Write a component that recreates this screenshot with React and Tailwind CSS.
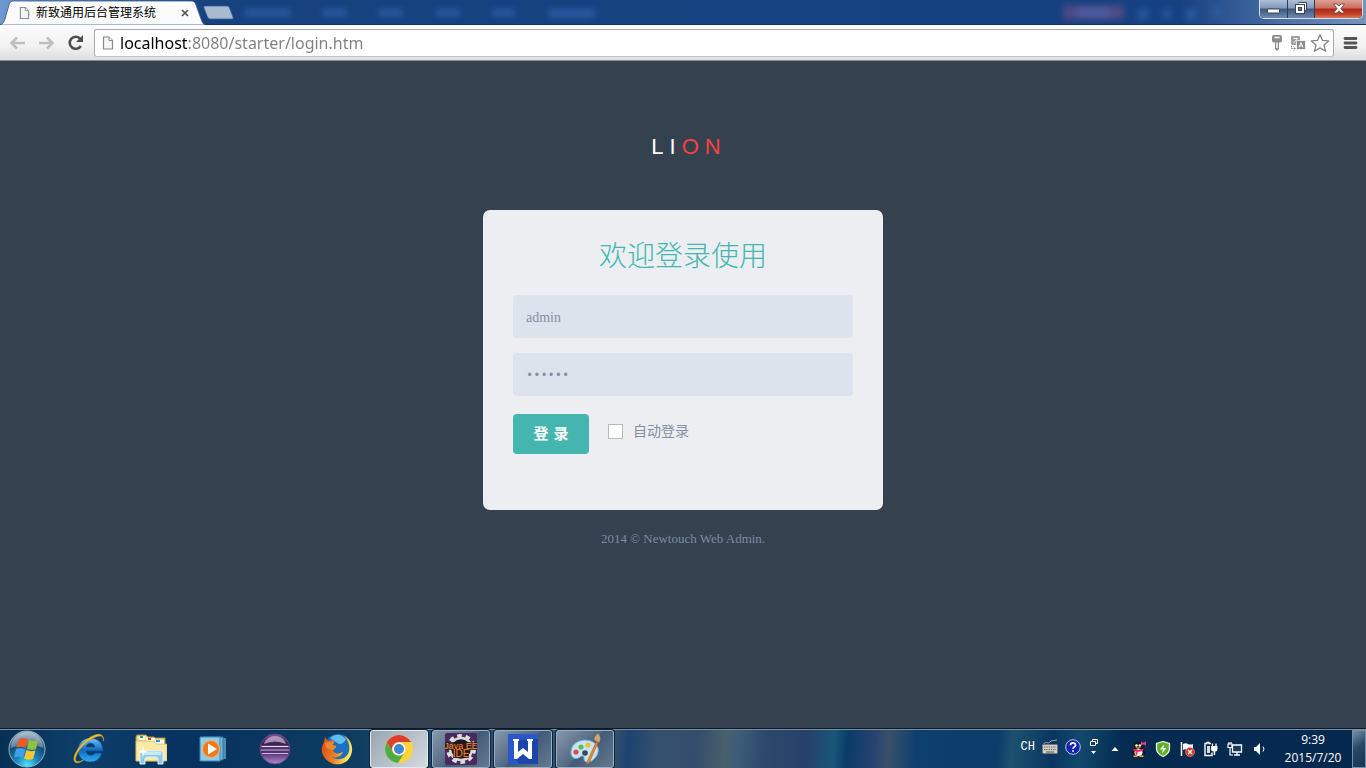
import React from "react";

function FileIcon({ className }) {
  return (
    <svg className={className} viewBox="0 0 12 15" aria-hidden="true">
      <path d="M1.5 1.5h5.5l3.5 3.5v8.5h-9z" fill="#f4f4f4" stroke="#8a8a8a" strokeWidth="1.2" />
      <path d="M7 1.5v3.5h3.5" fill="#fff" stroke="#8a8a8a" strokeWidth="1" />
    </svg>
  );
}

function TitleBar() {
  return (
    <header className="relative flex h-[25px] items-start justify-between border-b border-[#10346e] bg-[linear-gradient(90deg,#6f97d0_0px,#5f86c0_30px,#17427f_205px,#164181_1180px,#4a6ea5_1280px,#7795be_100%)]">
      <svg className="absolute inset-0 h-6 w-full" aria-hidden="true">
        <defs>
          <filter id="soft" x="-50%" y="-80%" width="200%" height="260%">
            <feGaussianBlur stdDeviation="3" />
          </filter>
        </defs>
        <g filter="url(#soft)" fill="#2f5fa8" opacity="0.75">
          <rect x="245" y="9" width="46" height="8" />
          <rect x="323" y="9" width="24" height="8" />
          <rect x="379" y="9" width="24" height="8" />
          <rect x="436" y="9" width="24" height="8" />
          <rect x="492" y="9" width="23" height="8" />
          <rect x="548" y="9" width="47" height="9" />
          <circle cx="1143" cy="14" r="6" />
          <circle cx="1167" cy="14" r="5" />
          <circle cx="1191" cy="14" r="6" />
          <circle cx="1217" cy="12" r="5" />
        </g>
        <rect x="1063" y="5" width="61" height="15" fill="#5a4b88" opacity="0.8" filter="url(#soft)" />
        <rect x="1077" y="9" width="34" height="7" fill="#4660a5" filter="url(#soft)" />
      </svg>

      <div className="relative flex">
        <div className="relative h-[25px] w-[205px]">
          <svg className="absolute inset-0 h-[25px] w-[205px]" viewBox="0 0 205 25" aria-hidden="true">
            <path d="M0 25c3-1 4-3 5-6L9 5c1-3 2-4 5-4h177c3 0 4 1 5 4l5 14c1 3 2 5 4 6z" fill="#fbfbfb" stroke="#365a90" strokeWidth="0.8" />
          </svg>
          <div className="relative flex h-[25px] items-center pl-[19px]">
            <FileIcon className="h-[14px] w-[11px]" />
            <span className="ml-[6px] text-[12px] leading-4 font-['Liberation_Sans','Noto_Sans_CJK_SC',sans-serif] text-black">新致通用后台管理系统</span>
            <button type="button" aria-label="关闭标签页" className="ml-[25px] flex h-4 w-2">
              <svg className="m-auto h-2 w-2" viewBox="0 0 8 8" aria-hidden="true">
                <path d="M1 1l6 6M7 1L1 7" stroke="#555" strokeWidth="1.7" />
              </svg>
            </button>
          </div>
        </div>
        <button type="button" aria-label="新标签页" className="-ml-[3px] h-5 w-8 pt-1">
          <svg className="h-4 w-8" viewBox="0 0 32 16" aria-hidden="true">
            <path d="M3 2h21c2 0 3 .5 3.500 2l3.500 9c.5 1.500 0 2-1.500 2H9c-2 0-3-1-3.500-2L2 4c-.5-1.300 0-2 1-2z" fill="#a9b9cf" stroke="#375f98" strokeWidth="0.8" />
          </svg>
        </button>
      </div>

      <div className="relative mr-[3px] flex h-[19px] w-[104px] overflow-hidden rounded-b-[5px] border border-t-0 border-[#d3deeb] bg-[#27334a]">
        <button type="button" aria-label="最小化" className="flex flex-1 border-r border-[#2b3c5c] bg-[linear-gradient(#aebfd6,#8299ba_45%,#3c5780_50%,#7089ad)]">
          <svg className="m-auto h-4 w-6" viewBox="0 0 24 16" aria-hidden="true">
            <rect x="6.500" y="8" width="12" height="4" rx="0.500" fill="#fff" stroke="#3b4453" />
          </svg>
        </button>
        <button type="button" aria-label="还原" className="flex flex-1 border-r border-[#2b3c5c] bg-[linear-gradient(#aebfd6,#8299ba_45%,#3c5780_50%,#7089ad)]">
          <svg className="m-auto h-4 w-6" viewBox="0 0 24 16" aria-hidden="true">
            <path d="M9.500 1.500h8v8h-2.500" fill="#fff" stroke="#3b4453" />
            <rect x="6.500" y="3.500" width="9" height="9" fill="#fff" stroke="#3b4453" />
            <rect x="9.500" y="6.500" width="3" height="3" fill="#667c9d" stroke="#3b4453" />
          </svg>
        </button>
        <button type="button" aria-label="关闭" className="flex w-[47px] bg-[linear-gradient(#dfa095,#cb6d5c_45%,#ae2814_50%,#c5442b_80%,#dc7a5d)]">
          <svg className="m-auto h-4 w-6" viewBox="0 0 24 16" aria-hidden="true">
            <path d="M6.500 3h3.500l2 2.200L14 3h3.500l-3.600 4.500 3.600 4.500H14l-2-2.200L10 12H6.500l3.600-4.500z" fill="#fff" stroke="#5b3a41" strokeWidth="0.800" />
          </svg>
        </button>
      </div>
    </header>
  );
}

function Toolbar() {
  return (
    <nav className="flex h-9 items-center border-b border-[#8b8d90] bg-[linear-gradient(#fcfcfc,#f2f2f2_60%,#dddddd)] pl-2">
      <button type="button" aria-label="后退" className="h-5 w-5">
        <svg className="h-5 w-5" viewBox="0 0 20 20" aria-hidden="true">
          <path d="M17 10H4M9 4.500L3.500 10 9 15.500" fill="none" stroke="#bfbfbf" strokeWidth="2.500" />
        </svg>
      </button>
      <button type="button" aria-label="前进" className="ml-2 h-5 w-5">
        <svg className="h-5 w-5" viewBox="0 0 20 20" aria-hidden="true">
          <path d="M3 10h13M11 4.500l5.500 5.500-5.500 5.500" fill="none" stroke="#bfbfbf" strokeWidth="2.500" />
        </svg>
      </button>
      <button type="button" aria-label="重新加载" className="ml-[10px] h-5 w-5">
        <svg className="h-5 w-5" viewBox="0 0 20 20" aria-hidden="true">
          <path d="M14.800 13A6 6 0 1 1 14 5.600" fill="none" stroke="#4d4d4d" strokeWidth="2.600" />
          <path d="M17 2v7h-7z" fill="#4d4d4d" />
        </svg>
      </button>
      <div className="ml-2 flex h-7 min-w-0 flex-1 items-center rounded-[3px] border border-[#a9a9a9] border-b-[#c4c4c4] bg-white pr-[3px] pl-[7px]">
        <FileIcon className="h-[16px] w-[12px] shrink-0" />
        <input
          type="text"
          aria-label="地址栏"
          defaultValue="localhost:8080/starter/login.htm"
          className="ml-[6px] h-6 min-w-0 flex-1 bg-[linear-gradient(90deg,#000_67px,#7f7f7f_67px)] bg-clip-text p-0 text-[16px] leading-6 font-['Noto_Sans','Open_Sans',sans-serif] text-transparent caret-black outline-none"
        />
        <div className="flex shrink-0 items-center gap-[5px]">
          <button type="button" aria-label="已保存的密码" className="h-5 w-4">
            <svg className="h-5 w-4" viewBox="0 0 16 20" aria-hidden="true">
              <path d="M3 4q0-2 2-2h6q2 0 2 2v3.500q0 2-2 2h-1V16l-1.500 1.500h-1L6 16V9.500H5q-2 0-2-2z" fill="#8c8c8c" />
              <path d="M5.500 4.500h5M8 9.500V15" stroke="#fff" strokeWidth="1.500" />
            </svg>
          </button>
          <button type="button" aria-label="翻译此页" className="h-5 w-4">
            <svg className="h-5 w-4" viewBox="0 0 16 20" aria-hidden="true">
              <rect x="1" y="3" width="9" height="9" rx="1" fill="#a0a0a0" />
              <path d="M3.500 5.500h4M7 5.500c-.5 2-2 3.500-3.500 4" fill="none" stroke="#fff" />
              <rect x="6.500" y="7.500" width="9" height="9" rx="1" fill="#8c8c8c" stroke="#fff" strokeWidth="0.800" />
              <path d="M9 14.500l2-5 2 5M9.800 12.800h2.400" fill="none" stroke="#fff" />
              <path d="M1.500 13v2.500H5M3.500 13.500l2 2-2 2" fill="none" stroke="#8c8c8c" strokeDasharray="1.500 0.700" />
            </svg>
          </button>
          <button type="button" aria-label="为此网页添加书签" className="-ml-px h-5 w-5">
            <svg className="h-5 w-5" viewBox="0 0 20 20" aria-hidden="true">
              <path d="M10 1.500l2.500 5.900 6.200.5-4.700 4.100 1.500 6.200L10 14.900l-5.500 3.300L6 12 1.300 7.900l6.200-.5z" fill="#fff" stroke="#858585" strokeWidth="1.300" strokeLinejoin="round" />
            </svg>
          </button>
        </div>
      </div>
      <button type="button" aria-label="菜单" className="mx-2 flex h-5 w-4 items-center justify-center">
        <svg className="h-4 w-4" viewBox="0 0 16 16" aria-hidden="true">
          <path d="M3 3.500h11M3 8h11M3 12.500h11" stroke="#555" strokeWidth="2.800" strokeLinecap="round" />
        </svg>
      </button>
    </nav>
  );
}

function LoginPage() {
  return (
    <main className="flex flex-1 flex-col items-center bg-[#364150] pt-[70px] pb-10 font-['Liberation_Serif','Noto_Sans_CJK_SC',serif] text-[14px]">
      <div className="flex h-8 items-center gap-[6px] pl-[6px] text-[22px] leading-8 font-['Liberation_Sans',sans-serif] text-white">
        <span>L</span>
        <span>I</span>
        <span className="text-[#f9423f]">O</span>
        <span className="text-[#f9423f]">N</span>
      </div>
      <form className="mt-[47px] w-full max-w-[400px] rounded-[7px] bg-[#eceef1] px-[30px] pt-6 pb-14" onSubmit={(e) => e.preventDefault()}>
        <h1 className="text-center text-[28px] leading-10 font-light font-['Noto_Sans_CJK_SC',sans-serif] text-[#45b6af]">欢迎登录使用</h1>
        <input type="text" aria-label="用户名" defaultValue="admin" className="mt-[21px] block h-[43px] w-full rounded-[4px] bg-[#dde3ec] px-[13px] pt-[2px] text-[#8290a3] outline-none" />
        <input type="password" aria-label="密码" defaultValue="123456" className="mt-[15px] block h-[43px] w-full rounded-[4px] bg-[#dde3ec] px-[13px] pt-[2px] text-[12px] font-['Liberation_Mono',monospace] text-[#8290a3] outline-none" />
        <div className="mt-[18px] flex items-center">
          <button type="submit" className="h-10 w-[76px] rounded-[4px] bg-[#45b6af] text-[15px] font-bold font-['DejaVu_Sans','Noto_Sans_CJK_SC',sans-serif] text-white">登 录</button>
          <input id="remember" type="checkbox" className="mb-[5px] ml-[19px] h-[15px] w-[15px] appearance-none border border-[#b8b8b8] bg-white checked:bg-[#45b6af]" />
          <label htmlFor="remember" className="mb-1 ml-[10px] leading-5 text-[#8290a3]">自动登录</label>
        </div>
      </form>
      <footer className="mt-[19px] text-[13px] leading-5 text-[#7a8ca5]">2014 © Newtouch Web Admin.</footer>
    </main>
  );
}

function StartIcon() {
  return (
    <svg className="h-[38px] w-[38px]" viewBox="0 0 38 38" aria-hidden="true">
      <defs>
        <radialGradient id="orb" cx="0.5" cy="0.95" r="0.9">
          <stop offset="0" stopColor="#4fe5ff" />
          <stop offset="0.35" stopColor="#1687bd" />
          <stop offset="0.7" stopColor="#174970" />
          <stop offset="1" stopColor="#8aa5b8" />
        </radialGradient>
      </defs>
      <circle cx="19" cy="19" r="18" fill="url(#orb)" stroke="#8fb3c7" />
      <path d="M3 18a16 16 0 0 1 32 0c-8-4-24-3-32 0z" fill="#fff" opacity="0.3" />
      <path d="M11 9c3-1.500 6-1 9 .5L18 18c-3-1.500-6-1.500-9.500-.5z" fill="#ee5a24" />
      <path d="M21 10c3 1.300 5.500 1.500 9 .3L28 19c-3 1.300-6 1-9-.3z" fill="#8cc63e" />
      <path d="M8 19c3-1.200 6-1 9.500.3L15 28c-3-1.500-6-1.500-9-.3z" fill="#3f9fe8" />
      <path d="M18.500 20c3 1.400 6 1.500 9 .4L25 29c-3 1.200-6 1-9-.4z" fill="#fcc52f" />
    </svg>
  );
}

function IeIcon() {
  return (
    <svg className="h-8 w-8" viewBox="0 0 32 32" aria-hidden="true">
      <defs>
        <linearGradient id="ie" x2="0" y2="1">
          <stop offset="0" stopColor="#72c7f5" />
          <stop offset="0.5" stopColor="#1168c0" />
          <stop offset="1" stopColor="#2bb0f4" />
        </linearGradient>
      </defs>
      <path d="M30 18H13c0 4 6 6 9 2h7c-2 6-6 9-12 9-7 0-12-5-12-12S10 5 17 5c8 0 13 5 13 13zM13 14h9c-1-5-8-5-9 0z" fill="url(#ie)" stroke="#0b4e94" strokeWidth="0.700" />
      <path d="M30.500 8c1-5-3-6-8-4C12 8 4 18 2.500 25c-1 5 4 4 8 2-5 4-10 4-9.500-2C2 17 13 5 22 2c6-2 9 1 8.500 6z" fill="#f8c52e" stroke="#d19c1c" strokeWidth="0.700" />
    </svg>
  );
}

function ExplorerIcon() {
  return (
    <svg className="h-8 w-8" viewBox="0 0 32 32" aria-hidden="true">
      <path d="M1 4l1-2h9l2 2h6l1 1h10v23H1z" fill="#eed88b" stroke="#ad9342" />
      <path d="M4 3h6v4H4z" fill="#fff" /><path d="M5 3h3v2H5z" fill="#28a745" />
      <path d="M11 5h9v4h-9z" fill="#fff" /><path d="M13 5h3v2h-3z" fill="#dc402b" />
      <path d="M20 7h9v4h-9z" fill="#fff" /><path d="M21 7h4v2h-4z" fill="#2795e9" />
      <path d="M1 8h18l2 3h11v17H1z" fill="#fbe9a5" stroke="#cfb35c" strokeWidth="0.700" />
      <path d="M5 31V20q0-2 2-2h19q2 0 2 2v11h-5v-5q0-2-2-2h-9q-2 0-2 2v5z" fill="#8bc9e8" stroke="#d8f3ff" />
      <path d="M7 19h19v3H7z" fill="#c8e9f7" />
      <path d="M8 11l.7 6 4.300 2-4.300 1L8 26l-.7-6L3 19l4.300-2z" fill="#fff" />
    </svg>
  );
}

function MediaIcon() {
  return (
    <svg className="h-7 w-7" viewBox="0 0 28 28" aria-hidden="true">
      <path d="M8 3h19v21H8z" fill="#498fba" />
      <path d="M5 2h19v23H5z" fill="#70b7d8" stroke="#30769f" />
      <path d="M1 2h20v24H1z" fill="#8fcbe4" stroke="#3a88b5" />
      <circle cx="12" cy="14" r="8.500" fill="#ef7a1d" stroke="#fbb36b" />
      <path d="M9 8.500l9 5.500-9 5.500z" fill="#fff" />
    </svg>
  );
}

function EclipseIcon() {
  return (
    <svg className="h-8 w-8" viewBox="0 0 32 32" aria-hidden="true">
      <defs>
        <linearGradient id="ecl" x2="0" y2="1">
          <stop offset="0" stopColor="#7c5290" />
          <stop offset="0.35" stopColor="#38204f" />
          <stop offset="0.65" stopColor="#593579" />
          <stop offset="1" stopColor="#b48dd0" />
        </linearGradient>
      </defs>
      <circle cx="16" cy="16" r="15" fill="url(#ecl)" stroke="#68457f" />
      <path d="M5 11Q8 3 16 3t11 8Q16 6 5 11z" fill="#e4cfeb" opacity="0.600" />
      <path d="M2.500 13.500h27" stroke="#e5d5ee" strokeWidth="1.300" />
      <path d="M2 17h28M3 20.500h26" stroke="#cdb4dc" strokeWidth="1.200" />
    </svg>
  );
}

function FirefoxIcon() {
  return (
    <svg className="h-8 w-8" viewBox="0 0 32 32" aria-hidden="true">
      <defs>
        <linearGradient id="fox" x2="1" y2="0.300">
          <stop offset="0" stopColor="#d9431c" />
          <stop offset="0.600" stopColor="#ef8323" />
          <stop offset="1" stopColor="#ffe65c" />
        </linearGradient>
      </defs>
      <circle cx="17" cy="14" r="13" fill="#1f6fc0" />
      <path d="M9 5Q17-2 25 6q-2 5-7 5-5-3-9-6z" fill="#5fc0ef" />
      <path d="M22 2c10 5 12 17 5 25-7 7-19 5-24-3C0 19 0 14 3 9l1-5 3 4c2-1 4-1 6 0 0 2-1 3-2 4l4 1c1 2-3 3-3 5 2 3 6 3 10 1-2 5-8 7-12 4 5 5 13 4 17-2 3-6 1-14-5-19z" fill="url(#fox)" />
      <path d="M4 10l4-1c2 0 3 0 5-1 0 2-1 3-2 4l4 1c1 1-2 2-3 4-4 0-8-2-8-7z" fill="#ef882a" />
    </svg>
  );
}

function ChromeIcon() {
  return (
    <svg className="h-[30px] w-[30px]" viewBox="0 0 30 30" aria-hidden="true">
      <circle cx="15" cy="15" r="14" fill="#fdd43a" />
      <path d="M2.900 8A14 14 0 0 1 27.100 8H15a7 7 0 0 0-6.100 10.500z" fill="#dc3f32" />
      <path d="M2.900 8A14 14 0 0 0 14 29l6.500-10.500A7 7 0 0 1 8.900 18.500z" fill="#4dac47" />
      <circle cx="15" cy="15" r="6.500" fill="#fff" />
      <circle cx="15" cy="15" r="5" fill="#3e86d8" />
    </svg>
  );
}

function JavaIcon() {
  return (
    <svg className="h-8 w-8" viewBox="0 0 32 32" aria-hidden="true">
      <rect width="32" height="32" rx="2" fill="#4a295f" />
      <circle cx="16" cy="16" r="13" fill="none" stroke="#dededf" strokeWidth="4" strokeDasharray="4.500 3.670" />
      <circle cx="16" cy="16" r="11" fill="#1b171d" stroke="#d8d8d8" strokeWidth="2.500" />
      <path d="M0 9h32v8H24v8H8v-8H0z" fill="#2a1820" opacity="0.850" />
      <text x="16" y="15.500" textAnchor="middle" fontFamily="Liberation Sans, sans-serif" fontSize="9" fill="#ff8a22">Java EE</text>
      <text x="16" y="24" textAnchor="middle" fontFamily="Liberation Sans, sans-serif" fontSize="10" fill="#ff8a22">IDE</text>
    </svg>
  );
}

function WriterIcon() {
  return (
    <svg className="h-[30px] w-[30px]" viewBox="0 0 30 30" aria-hidden="true">
      <rect width="30" height="30" fill="#2858c9" />
      <path d="M30 5v25H12l-6-6 5-18z" fill="#1e45aa" />
      <path d="M5 5h6v2h-1v11l5-4 5 4V7h-1V5h6v2h-1v18h-3l-6-5-6 5H6V7H5z" fill="#fff" />
    </svg>
  );
}

function PaintIcon() {
  return (
    <svg className="h-8 w-8" viewBox="0 0 32 32" aria-hidden="true">
      <path d="M2 18C3 9 13 5 22 8c9 3 9 12 4 17-5 6-11 5-11 1 0-3-1-4-4-2-5 4-10 0-9-6z" fill="#c5e4f5" stroke="#6da7cd" />
      <circle cx="7" cy="19" r="2.600" fill="#e64a3f" />
      <circle cx="12" cy="14" r="2.600" fill="#61bd4f" />
      <circle cx="19" cy="12" r="2.600" fill="#f1bf33" />
      <circle cx="16" cy="20" r="2.800" fill="#39495c" />
      <path d="M27 9l2 1-9 20c-1 2-3 1-2-1z" fill="#ed8628" stroke="#aa5517" strokeWidth="0.500" />
      <path d="M25 7c0-4 2-4 4-7 3 3 3 7 1 10z" fill="#cfa47a" stroke="#82603e" strokeWidth="0.500" />
    </svg>
  );
}

const pinned = [
  { name: "Internet Explorer", Icon: IeIcon },
  { name: "资源管理器", Icon: ExplorerIcon },
  { name: "媒体播放器", Icon: MediaIcon },
  { name: "Eclipse", Icon: EclipseIcon },
  { name: "Firefox", Icon: FirefoxIcon },
];

const running = [
  { name: "Java EE IDE", Icon: JavaIcon },
  { name: "WPS 文字", Icon: WriterIcon },
  { name: "画图", Icon: PaintIcon },
];

function TrayButton({ label, children, className = "w-4" }) {
  return (
    <button type="button" aria-label={label} className={"flex h-5 items-center justify-center " + className}>
      {children}
    </button>
  );
}

function Tray() {
  return (
    <div className="flex h-full items-center">
      <div className="mb-[5px] flex items-center gap-[7px]">
        <button type="button" className="text-[12px] leading-4 font-['Liberation_Mono',monospace] text-white">CH</button>
        <TrayButton label="键盘">
          <svg className="h-4 w-4" viewBox="0 0 16 16" aria-hidden="true">
            <path d="M2 5c0-3 5 0 6-2s4-1 7-2" fill="none" stroke="#aaa" />
            <rect x="0.500" y="5.500" width="15" height="9" rx="1" fill="#d0cfc9" stroke="#77756f" />
            <path d="M2 8h12M2 10.500h12" stroke="#5d5b56" strokeDasharray="1.300 1" />
            <path d="M4 13h8" stroke="#5d5b56" />
          </svg>
        </TrayButton>
        <TrayButton label="帮助">
          <svg className="h-4 w-4" viewBox="0 0 16 16" aria-hidden="true">
            <circle cx="8" cy="8" r="7.300" fill="#1224b0" stroke="#b8c5ee" />
            <path d="M5.500 6.200c0-3 5-3 5 0 0 1.700-2.500 1.700-2.500 3.600M8 11.200v1.500" fill="none" stroke="#fff" strokeWidth="1.700" />
          </svg>
        </TrayButton>
        <TrayButton label="语言栏选项" className="w-3">
          <svg className="h-[17px] w-3" viewBox="0 0 12 17" aria-hidden="true">
            <path d="M4.500 3.500v-2h5v4h-2M2.500 3.500h5v4h-5z" fill="none" stroke="#fff" />
            <path d="M3 13h5l-2.500 3z" fill="#fff" />
          </svg>
        </TrayButton>
      </div>
      <div className="ml-[7px] flex items-center gap-2">
        <TrayButton label="显示隐藏的图标">
          <svg className="h-2 w-2" viewBox="0 0 8 8" aria-hidden="true"><path d="M0.500 6h7L4 2z" fill="#fff" /></svg>
        </TrayButton>
        <TrayButton label="QQ">
          <svg className="h-4 w-4" viewBox="0 0 16 16" aria-hidden="true">
            <path d="M7 1c3.500 0 4.500 2.500 4.500 5.500L14 11c.5 1.500-.5 2-1.500 1.500-.5 2-2.500 3-5 3s-4.500-1-5-3C1.500 13 .5 12 1.500 10.500l1.500-4C3 3.500 4 1 7 1z" fill="#151015" />
            <ellipse cx="7.500" cy="11.500" rx="4" ry="3.500" fill="#fff" />
            <circle cx="5.500" cy="4.500" r="1.300" fill="#fff" />
            <circle cx="8.800" cy="4.500" r="1.300" fill="#fff" />
            <path d="M4 6.300h6.500L7.200 8z" fill="#f5a91c" />
            <path d="M2.500 7.500q5 2.500 9.500 0l.5 2q-3 1.500-6 1.300v3H4.500v-3.500l-2.300-.8z" fill="#ed2860" />
            <path d="M10 .500l2.300 1.300L15 .500v4l-2.700-1.200L10 4.500z" fill="#fb3a80" />
            <path d="M2.500 15.200h4M8.500 15.200h4" stroke="#f5a91c" strokeWidth="1.500" />
          </svg>
        </TrayButton>
        <TrayButton label="安全卫士">
          <svg className="h-4 w-4" viewBox="0 0 16 16" aria-hidden="true">
            <path d="M8 .5l6.500 2v5c0 4-3 6.500-6.500 8-3.500-1.500-6.500-4-6.500-8v-5z" fill="#5eae28" stroke="#eef5df" strokeWidth="1.300" />
            <path d="M9 3.500L5 8.500h3l-1 4 4.500-5.500H8.500z" fill="#fff" />
          </svg>
        </TrayButton>
        <TrayButton label="操作中心">
          <svg className="h-4 w-4" viewBox="0 0 16 16" aria-hidden="true">
            <path d="M2.500 1v14" stroke="#fff" strokeWidth="1.500" />
            <path d="M4 3q3-1.500 5 0 3 1 5 0v6q-3 1.500-5 0-3-1.500-5 0z" fill="#fff" />
            <circle cx="11" cy="11" r="4.500" fill="#dc2e24" stroke="#f8a89e" strokeWidth="0.600" />
            <path d="M9 9l4 4M13 9l-4 4" stroke="#fff" strokeWidth="1.500" />
          </svg>
        </TrayButton>
        <TrayButton label="电源">
          <svg className="h-4 w-4" viewBox="0 0 16 16" aria-hidden="true">
            <path d="M8 2.500H6v-1H4v1H2v12h7v-3" fill="none" stroke="#fff" strokeWidth="1.400" />
            <path d="M4 5h3v7H4z" fill="#d7dde3" />
            <path d="M8 5h6.500v3q0 2.500-2.300 2.500v3.500h-1.500v-3.500Q8 10.500 8 8z" fill="#fff" />
            <path d="M9.500 5V2.500M13 5V2.500" stroke="#fff" strokeWidth="1.300" />
          </svg>
        </TrayButton>
        <TrayButton label="网络">
          <svg className="h-4 w-4" viewBox="0 0 16 16" aria-hidden="true">
            <path d="M5.500 4h9v7h-9zM7 14h6M10 11v3" fill="#173b62" stroke="#fff" strokeWidth="1.300" />
            <path d="M1 3h4v3.500H1zM2 3V1M4 3V1M3 6.500V14h3" fill="none" stroke="#fff" strokeWidth="1.200" />
          </svg>
        </TrayButton>
        <TrayButton label="音量">
          <svg className="h-4 w-4" viewBox="0 0 16 16" aria-hidden="true">
            <path d="M3 6h2l4-4v12l-4-4H3z" fill="#fff" />
            <path d="M12 5.500q2 2.500 0 5" fill="none" stroke="#fff" />
          </svg>
        </TrayButton>
      </div>
      <button type="button" className="ml-[14px] flex w-[64px] flex-col items-center text-[12px] leading-[18px] font-['Open_Sans','Noto_Sans',sans-serif] text-white">
        <time dateTime="09:39">9:39</time>
        <time dateTime="2015-07-20">2015/7/20</time>
      </button>
      <button type="button" aria-label="显示桌面" className="ml-[7px] h-full w-[14px] border border-[#7290a8] bg-[linear-gradient(145deg,#7890a3,#284865_45%,#143654)]" />
    </div>
  );
}

function Taskbar() {
  return (
    <nav aria-label="任务栏" className="flex h-10 items-center justify-between border-t border-[#0b1826] bg-[linear-gradient(95deg,#083056_0%,#0d3f69_6%,#07315f_14%,#0c3c60_25%,#31506f_38%,#35506d_45%,#1d4370_46%,#35506d_48%,#344d6c_51%,#48606b_53%,#3e5d78_54%,#2c486b_56%,#28416a_59%,#1a567a_61%,#0b3b68_62%,#294370_64%,#3a5168_65%,#0d3f6f_67%,#0b3d6a_73%,#1d516e_74%,#0a3661_77%,#12496d_79%,#052b50_82%,#06284f_100%)]">
      <div className="flex h-full flex-1 items-center border-t border-[#7790a5]">
        <button type="button" aria-label="开始" className="flex w-[54px] justify-center"><StartIcon /></button>
        <div className="ml-[6px] flex h-full items-center gap-1">
          {pinned.map(({ name, Icon }) => (
            <button key={name} type="button" aria-label={name} className="flex h-[38px] w-[58px] items-center justify-center"><Icon /></button>
          ))}
          <button type="button" aria-label="Google Chrome" className="flex h-[38px] w-[58px] items-center justify-center rounded-[3px] border border-[#e4e9ed] bg-[linear-gradient(135deg,#99a5b2,#b7c0c9_50%,#d5d9de)] shadow-[0_0_0_1px_#0e2740]"><ChromeIcon /></button>
          {running.map(({ name, Icon }) => (
            <button key={name} type="button" aria-label={name} className="flex h-[38px] w-[58px] items-center justify-center rounded-[3px] border border-[#9eafbf] bg-[linear-gradient(135deg,#8798ac,#526983_48%,#425b76_52%,#647a91)] shadow-[0_0_0_1px_#0e2740]"><Icon /></button>
          ))}
        </div>
      </div>
      <div className="h-full border-t border-[#7790a5]"><Tray /></div>
    </nav>
  );
}

export default function App() {
  return (
    <div className="flex min-h-screen flex-col">
      <TitleBar />
      <Toolbar />
      <LoginPage />
      <Taskbar />
    </div>
  );
}
